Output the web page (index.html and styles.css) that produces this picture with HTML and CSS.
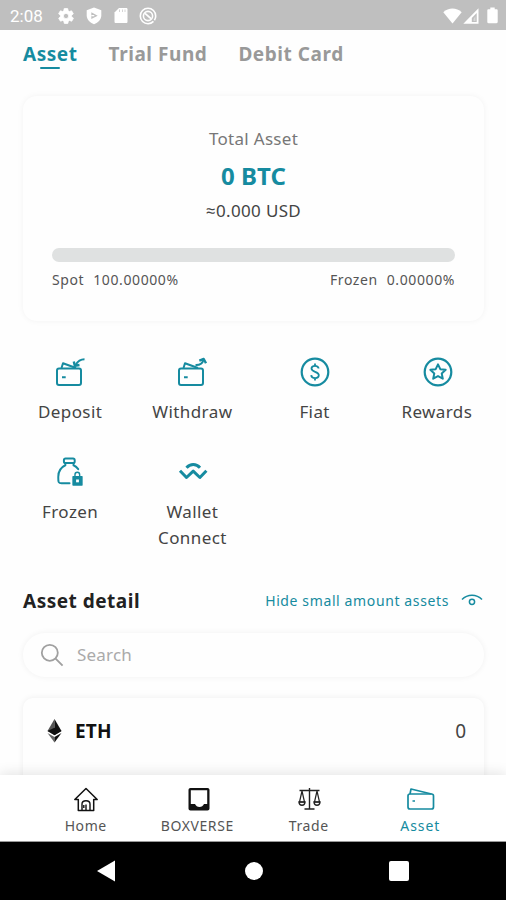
FILE: index.html
```html
<!DOCTYPE html>
<html lang="en">
<head>
	<meta charset="UTF-8">
	<title>Asset</title>
	<link rel="stylesheet" href="styles.css">
</head>
<body>
	<div class="status">
		<span class="time">2:08</span>
		<svg class="st-gear" width="18" height="18" viewBox="0 0 24 24"><path fill="#fff" stroke="#fff" fill-rule="evenodd" d="M19.4 13c.1-.3.1-.7.1-1s0-.7-.1-1l2.1-1.6c.2-.2.3-.4.1-.7l-2-3.400c-.1-.2-.4-.3-.6-.2l-2.500 1c-.5-.4-1.100-.7-1.700-1l-.4-2.600c0-.3-.2-.5-.5-.5h-4c-.3 0-.5.2-.5.5L9.100 5.100c-.6.3-1.200.6-1.700 1l-2.500-1c-.2-.1-.5 0-.6.2l-2 3.400c-.1.3 0 .5.1.7L4.600 11c-.1.300-.1.700-.1 1s0 .700.1 1l-2.100 1.600c-.2.2-.3.4-.1.700l2 3.400c.1.200.4.300.6.200l2.500-1c.5.400 1.100.700 1.700 1l.4 2.600c0 .300.2.500.5.500h4c.3 0 .5-.2.5-.5l.4-2.600c.6-.3 1.200-.6 1.700-1l2.500 1c.2.100.5 0 .6-.2l2-3.400c.1-.3 0-.5-.1-.7zM12 15.500a3.500 3.500 0 1 1 0-7 3.500 3.500 0 0 1 0 7z"/></svg>
		<svg class="st-shield" width="16" height="18" viewBox="0 0 16 18"><path fill="#fff" d="M8 .5l7.300 2.800v5c0 4.200-3 7.300-7.300 8.900C3.700 15.600.7 12.500.7 8.300v-5z"/><path fill="#bfbfbf" d="M5.300 5.300l6.400 3.400-6.400 3.400z"/><path fill="#fff" d="M5.300 8h3v1.300h-3z"/></svg>
		<svg class="st-sd" width="14" height="17" viewBox="0 0 14 17"><path fill="#fff" d="M5 1h7.200c.8 0 1.300.5 1.300 1.300v12.400c0 .8-.5 1.300-1.300 1.300H1.800c-.8 0-1.300-.5-1.300-1.300V5.500z"/><path stroke="#d5d5d5" d="M5.500 2.500v2.500M8.500 2.500v2.500M11 2.500v2.500"/></svg>
		<svg class="st-data" width="18" height="18" viewBox="0 0 18 18" fill="none" stroke="#fff"><circle cx="9" cy="9" r="7.700" stroke-width="1.600" stroke-dasharray="4.500 1.500 42.400 0"/><circle cx="9" cy="9" r="4.600" stroke-width="1.600"/><path stroke-width="1.800" d="M6 6.300l6 5.400"/></svg>
		<span class="space"></span>
		<svg width="19" height="16" viewBox="0 0 19 16"><path fill="#fff" d="M9.500 15.500L.3 4.200C5.500-.6 13.500-.6 18.700 4.200z"/></svg>
		<svg class="st-cell" width="16" height="16" viewBox="0 0 16 16"><path fill="#fff" fill-rule="evenodd" d="M15.500.3v15.400H.3zM13.700 5L8.800 10v4h4.900z"/><path fill="#fff" d="M10.500 11l2-3v5h-2z" opacity=".4"/></svg>
		<svg class="st-bat" width="11" height="17" viewBox="0 0 11 17"><path fill="#fff" d="M3.300.5h4.400v1.700h1.800c.7 0 1.200.5 1.200 1.200v11.700c0 .7-.5 1.200-1.200 1.200h-8c-.7 0-1.200-.5-1.200-1.200V3.400c0-.7.5-1.200 1.200-1.200h1.800z"/></svg>
	</div>

	<div class="content">
		<ul class="tabs">
			<li class="select">Asset</li>
			<li>Trial Fund</li>
			<li>Debit Card</li>
		</ul>

		<div class="total">
			<div class="total-tit">Total Asset</div>
			<div class="btc">0 BTC</div>
			<div class="usd">≈0.000 USD</div>
			<div class="bar"></div>
			<div class="rates">
				<div><span>Spot</span><span>100.00000%</span></div>
				<div><span>Frozen</span><span>0.00000%</span></div>
			</div>
		</div>

		<ul class="menu">
			<li>
				<svg width="32" height="30" viewBox="0 0 32 30" fill="none" stroke="#168ba0" stroke-width="2" stroke-linejoin="round"><rect x="3" y="11.500" width="24" height="16.500" rx="2"/><path d="M7.500 11l1.500-4.800 13 4.800M8 20.300h3.700"/><path d="M30.500 2.200c-3.500 0-6.800 2-8.800 5.600"/><path stroke-width="2.400" d="M19.800 4.500l1 4.300 4.700-.8"/></svg>
				<span>Deposit</span>
			</li>
			<li>
				<svg width="32" height="30" viewBox="0 0 32 30" fill="none" stroke="#168ba0" stroke-width="2" stroke-linejoin="round"><rect x="3" y="11.500" width="24" height="16.500" rx="2"/><path d="M7.500 11l1.500-4.800 13 4.800M8 20.300h3.700"/><path d="M19.500 8c4.200.2 7-1.300 8-5.300"/><path stroke-width="2.400" d="M23.300 3.600l4.400-1.600 2.300 4.300"/></svg>
				<span>Withdraw</span>
			</li>
			<li>
				<svg width="30" height="30" viewBox="0 0 30 30" fill="none" stroke="#168ba0" stroke-width="2.200"><circle cx="15" cy="15" r="13.300"/><path stroke-width="1.800" d="M18.600 11.500c-.2-1.800-1.500-2.700-3.600-2.700s-3.500 1-3.500 2.800c0 4 7.300 2.400 7.300 6.500 0 1.900-1.500 3-3.700 3s-3.700-1-3.900-3M15 6.500v2.300M15 21v2.500"/></svg>
				<span>Fiat</span>
			</li>
			<li>
				<svg class="star" width="30" height="30" viewBox="0 0 30 30" fill="none" stroke="#168ba0" stroke-width="2.200" stroke-linejoin="round"><circle cx="15" cy="15" r="13.300"/><path stroke-width="2" d="M15 7.300l2.300 4.900 5.400.6-4 3.600 1.100 5.300-4.800-2.600-4.800 2.600 1.100-5.300-4-3.600 5.400-.6z"/></svg>
				<span>Rewards</span>
			</li>
			<li>
				<svg width="30" height="32" viewBox="0 0 30 32" fill="none" stroke="#168ba0" stroke-width="2.100"><rect x="8.500" y="1.500" width="11.500" height="5" rx="1.800"/><path d="M10 6.500v2.300C5.500 11 2.500 15.500 2.500 21c0 2-.2 4.300.5 5.800.5 1 1.500 1.200 3 1.200h8.500M18.800 6.500v2.300c2.200 1 3.800 2.500 5 4.200" stroke-linecap="round"/><path d="M20.300 21v-2.200c0-3.400 5-3.400 5 0V21" stroke-width="1.500"/><rect x="17.500" y="20.200" width="11" height="10.500" rx=".8" fill="#168ba0" stroke="none"/><rect x="21.500" y="24" width="3" height="3" fill="#fff" stroke="none"/></svg>
				<span>Frozen</span>
			</li>
			<li>
				<svg class="wc" width="30" height="30" viewBox="0 0 30 30" fill="none" stroke="#168ba0" stroke-width="3"><path d="M8.500 10.800c3.800-4.300 9.700-4.300 13.500 0M2 13.800l6.500 6.700 6.700-6.300 6.700 6.300 6.500-6.700" stroke-linejoin="round"/></svg>
				<span>Wallet Connect</span>
			</li>
		</ul>

		<div class="detail-tit">
			<h2>Asset detail</h2>
			<span class="hide">Hide small amount assets</span>
			<svg width="22" height="14" viewBox="0 0 22 14" fill="none" stroke="#168ba0" stroke-width="1.500"><path d="M1 5.500C6.500-.3 15.500-.3 21 5.500"/><circle cx="11" cy="7.800" r="2.600"/></svg>
		</div>

		<div class="search">
			<svg width="24" height="24" viewBox="0 0 24 24" fill="none" stroke="#a0a0a0" stroke-width="1.800"><circle cx="9.800" cy="9.800" r="8"/><path d="M15.600 15.600l7 7"/></svg>
			<span>Search</span>
		</div>

		<div class="coin">
			<svg width="15" height="24" viewBox="0 0 15 24"><path fill="#555" d="M7.500 0v16L.5 12z"/><path fill="#111" d="M7.500 0l7 12-7 4z"/><path fill="#111" d="M.5 12l7-3.200 7 3.200-7 4.200z"/><path fill="#666" d="M.5 14l7 4v5.500z"/><path fill="#111" d="M14.500 14l-7 4v5.500z"/></svg>
			<span class="name">ETH</span>
			<span class="num">0</span>
		</div>
	</div>

	<ul class="tabbar">
		<li>
			<svg width="26" height="26" viewBox="0 0 26 26" fill="none" stroke="#111" stroke-width="1.500" stroke-linejoin="round"><path d="M5.300 23.500V12.500H1.800L13 1.500l11.200 11h-3.500v11z"/><path d="M9 23.500v-6.500c0-4.300 8-4.300 8 0v6.500M13 17.500v6M10.800 18v3" stroke-width="1.400"/></svg>
			<span>Home</span>
		</li>
		<li>
			<svg class="box" width="26" height="26" viewBox="0 0 26 26"><path fill="#111" fill-rule="evenodd" d="M4.500 1h17c1.200 0 2 .8 2 2v18.500c0 1.200-.8 2-2 2h-17c-1.200 0-2-.8-2-2V3c0-1.200.8-2 2-2zM4.800 3.300V17h4.200c1 2 2.300 3 4.500 3s3.500-1 4.500-3h3.200V3.300z"/></svg>
			<span>BOXVERSE</span>
		</li>
		<li>
			<svg width="26" height="26" viewBox="0 0 26 26" fill="none" stroke="#222" stroke-width="1.400"><path d="M13.500 1v20.500M8.500 22h10M3.500 3.500h20"/><path d="M6 4L3.500 15h5zM21 4l-2.500 11h5z" stroke-width="1.200"/><path d="M3 15c.3 4.300 5.700 4.300 6 0zM18 15c.3 4.300 5.700 4.300 6 0z"/></svg>
			<span>Trade</span>
		</li>
		<li class="select">
			<svg width="30" height="26" viewBox="0 0 30 26" fill="none" stroke="#168ba0" stroke-width="1.700" stroke-linejoin="round"><rect x="3" y="7" width="25.500" height="15" rx="2"/><path d="M5 7l1-5 20.500 5M7.500 14h2.500"/></svg>
			<span>Asset</span>
		</li>
	</ul>

	<div class="keys">
		<svg width="18" height="22" viewBox="0 0 18 22"><path fill="#fff" d="M0 11L18 .5v21z"/></svg>
		<svg class="circle" width="18" height="18" viewBox="0 0 18 18"><circle cx="9" cy="9" r="9" fill="#fff"/></svg>
		<svg width="20" height="20" viewBox="0 0 20 20"><rect width="20" height="20" rx="2" fill="#fff"/></svg>
	</div>
</body>
</html>
```
FILE: styles.css
```css
*{
	margin: 0;
	padding: 0;
	box-sizing: border-box;
}
body{
	display: flex;
	flex-direction: column;
	height: 900px;
	background: #fefefe;
	font-family: "Noto Sans", "Open Sans", sans-serif;
	color: #444;
	overflow: hidden;
}
ul{
	list-style: none;
}
svg{
	display: block;
	flex: none;
}
.status{
	display: flex;
	align-items: center;
	height: 30px;
	padding: 1px 8px 0 10px;
	background: #bfbfbf;
}
.time{
	width: 47px;
	font-family: Roboto, sans-serif;
	font-size: 17px;
	color: #fff;
}
.st-shield{
	margin-left: 11px;
}
.st-sd{
	margin-left: 12px;
}
.st-data{
	margin-left: 11px;
}
.space{
	flex: 1;
}
.st-cell{
	margin-left: 1px;
}
.st-bat{
	margin-left: 8px;
}
.content{
	flex: 1;
	min-height: 0;
	overflow: hidden;
}
.tabs{
	display: flex;
	height: 66px;
	padding: 10px 23px 0;
	gap: 31px;
	font-size: 19px;
	font-weight: bold;
	line-height: 28px;
	letter-spacing: .55px;
	white-space: nowrap;
	color: #999;
}
.tabs .select{
	color: #168ba0;
}
.tabs .select:after{
	content: "";
	display: block;
	width: 20px;
	height: 2px;
	margin: -1px auto 0;
	border-radius: 1px;
	background: #168ba0;
}
.total{
	height: 225px;
	margin: 0 22px 0 23px;
	padding: 30px 29px 0;
	border-radius: 14px;
	background: #fefefe;
	box-shadow: 0 0 6px rgba(0,0,0,.05);
	text-align: center;
}
.total-tit{
	font-size: 17px;
	line-height: 26px;
	letter-spacing: .3px;
	color: #777;
}
.btc{
	font-size: 24px;
	font-weight: bold;
	line-height: 34px;
	margin-top: 7px;
	letter-spacing: .1px;
	color: #168ba0;
}
.usd{
	font-size: 17px;
	line-height: 26px;
	margin-top: 5px;
	letter-spacing: .35px;
}
.bar{
	height: 14px;
	margin-top: 24px;
	border-radius: 7px;
	background: #dfe1e1;
}
.rates{
	display: flex;
	justify-content: space-between;
	margin-top: 8px;
	font-size: 14px;
	line-height: 20px;
	letter-spacing: .6px;
	color: #555;
}
.rates div{
	display: flex;
	gap: 9px;
}
.menu{
	display: grid;
	grid-template-columns: repeat(4, 1fr);
	padding: 36px 8px 0 9px;
	row-gap: 32px;
	height: 261px;
	align-content: start;
}
.menu li{
	display: flex;
	flex-direction: column;
	align-items: center;
	text-align: center;
}
.menu svg{
	height: 30px;
}
.menu .star,
.menu .wc{
	margin-left: 2px;
}
.menu span{
	max-width: 90px;
	margin-top: 12px;
	font-size: 17px;
	line-height: 26px;
	letter-spacing: .4px;
}
.menu li:nth-child(-n+4){
	height: 68px;
}
.detail-tit{
	display: flex;
	align-items: center;
	height: 38px;
	padding: 0 23px;
	white-space: nowrap;
}
.detail-tit h2{
	flex: 1;
	font-size: 19px;
	letter-spacing: .5px;
	color: #222;
}
.hide{
	margin-right: 12px;
	padding-bottom: 2px;
	font-size: 14px;
	letter-spacing: .62px;
	color: #168ba0;
}
.search{
	display: flex;
	align-items: center;
	height: 44px;
	margin: 13px 22px 0 23px;
	padding-left: 17px;
	border-radius: 22px;
	box-shadow: 0 0 6px rgba(0,0,0,.06);
	font-size: 17px;
	letter-spacing: .2px;
	color: #aaa;
}
.search span{
	margin-left: 13px;
	padding-bottom: 1px;
}
.coin{
	display: flex;
	align-items: center;
	height: 120px;
	margin: 21px 22px 0 23px;
	padding: 0 18px 54px 24px;
	border-radius: 10px;
	box-shadow: 0 0 6px rgba(0,0,0,.07);
	font-size: 19px;
}
.coin .name{
	flex: 1;
	margin-left: 13px;
	letter-spacing: .2px;
	font-weight: bold;
	color: #111;
}
.tabbar{
	position: relative;
	display: flex;
	height: 67px;
	padding: 12px 30px 0;
	background: #fff;
	border-bottom: 1px solid #999;
	box-shadow: 0 -2px 12px rgba(0,0,0,.1);
}
.tabbar li{
	flex: 1;
	display: flex;
	flex-direction: column;
	align-items: center;
	font-size: 14px;
	line-height: 20px;
	letter-spacing: .6px;
	color: #555;
}
.tabbar span{
	margin-top: 3px;
}
.tabbar .box{
	margin-left: 3px;
}
.tabbar .select{
	letter-spacing: .9px;
	color: #168ba0;
}
.keys{
	display: flex;
	justify-content: space-between;
	align-items: center;
	height: 58px;
	padding: 0 97px;
	background: #000;
}
.keys .circle{
	margin-left: 3px;
}
```
